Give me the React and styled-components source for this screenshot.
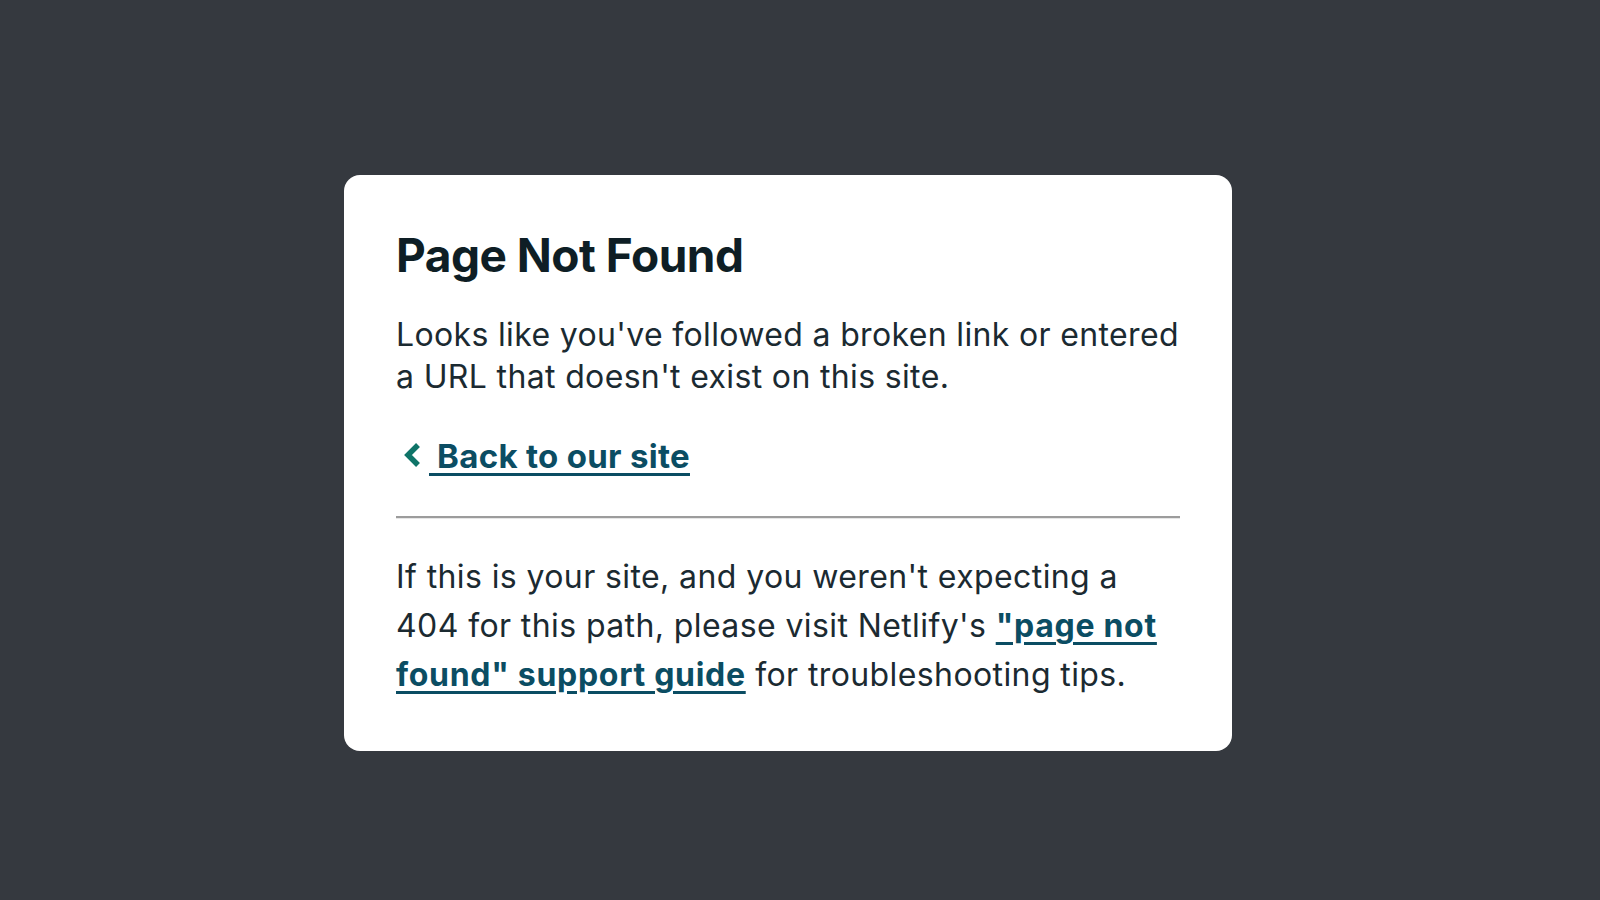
import React from 'react';
import styled, { createGlobalStyle } from 'styled-components';

const GlobalStyle = createGlobalStyle`
  html, body {
    margin: 0;
    padding: 0;
    background: #35393f;
  }
  body {
    font-family: Inter, "Noto Sans", "Liberation Sans", sans-serif;
    -webkit-font-smoothing: antialiased;
  }
`;

const Page = styled.div`
  min-height: 900px;
  padding: 175px 0 0 344px;
  box-sizing: border-box;
`;

const Card = styled.main`
  width: 888px;
  box-sizing: border-box;
  padding: 52px 52px 52px;
  background: #ffffff;
  border-radius: 16px;
  color: #1b2a31;
`;

const Title = styled.h1`
  margin: 0 0 31px;
  font-size: 46px;
  line-height: 56px;
  font-weight: 700;
  letter-spacing: -0.5px;
  color: #0e1e25;
`;

const Text = styled.p`
  margin: 0;
  font-size: 32px;
  line-height: ${({ $loose }) => ($loose ? '49px' : '42px')};
  letter-spacing: ${({ $loose }) => ($loose ? '0.4px' : '0.35px')};
  font-weight: 400;
  white-space: nowrap;
`;

const BackRow = styled.p`
  margin: 36px 0 0;
  display: flex;
  align-items: center;
  font-size: 33px;
  line-height: 44px;
  letter-spacing: 0.3px;
`;

const Chevron = styled.svg`
  width: 20px;
  height: 28px;
  margin: -2px 7px 0 6px;
  flex: none;
`;

const Link = styled.a`
  color: #0b4d63;
  font-weight: 700;
  letter-spacing: ${({ $wide }) => ($wide ? '0.7px' : 'inherit')};
  text-decoration: underline;
  text-decoration-thickness: 3px;
  text-underline-offset: 5px;
`;

const Rule = styled.hr`
  margin: 38px 0 33px;
  border: none;
  border-top: 2px solid #9c9c9c;
  border-bottom: 1px solid #e6e6e6;
`;

export default function App() {
  return (
    <>
      <GlobalStyle />
      <Page>
        <Card>
          <Title>Page Not Found</Title>
          <Text>
            Looks like you've followed a broken link or entered
            <br />
            a URL that doesn't exist on this site.
          </Text>
          <BackRow>
            <Chevron viewBox="0 0 20 28" aria-hidden="true">
              <polyline
                points="16,4 6,14 16,24"
                fill="none"
                stroke="#0f7468"
                strokeWidth="5.5"
                strokeLinecap="butt"
                strokeLinejoin="miter"
              />
            </Chevron>
            <Link href="#">&nbsp;Back to our site</Link>
          </BackRow>
          <Rule />
          <Text $loose>
            If this is your site, and you weren't expecting a
            <br />
            404 for this path, please visit Netlify's{' '}
            <Link href="#" $wide>
              "page not
              <br />
              found" support guide
            </Link>{' '}
            for troubleshooting tips.
          </Text>
        </Card>
      </Page>
    </>
  );
}
